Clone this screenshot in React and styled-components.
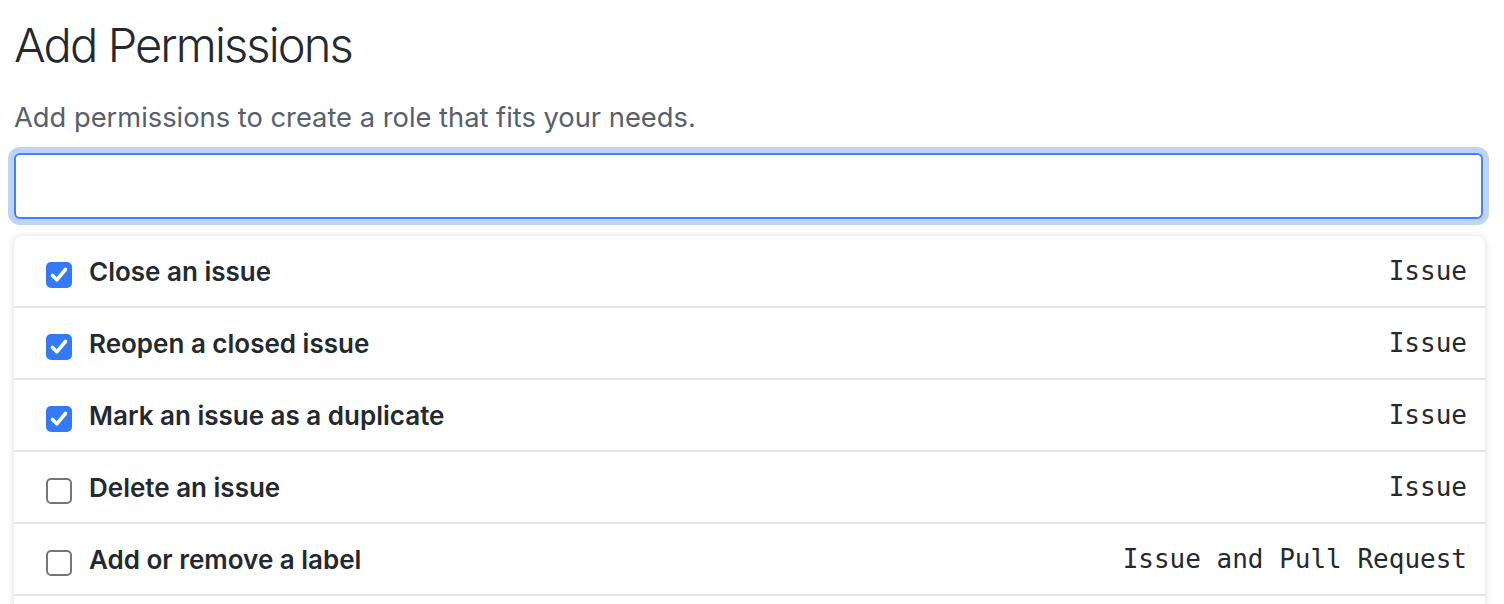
import React from "react";
import styled, { createGlobalStyle } from "styled-components";

const Global = createGlobalStyle`
  html, body { margin: 0; padding: 0; background: #ffffff; }
  body { font-family: Inter, "Noto Sans", sans-serif; color: #24292f; }
`;

const Page = styled.div`
  padding: 0 21px 0 14px;
  display: flex;
  flex-direction: column;
`;

const Title = styled.h1`
  margin: 15px 0 0;
  font-size: 47px;
  font-weight: 300;
  line-height: 60px;
  letter-spacing: -1.9px;
  color: #24292f;
`;

const Description = styled.p`
  margin: 25px 0 0;
  font-size: 27.3px;
  font-weight: 400;
  line-height: 36px;
  color: #57606a;
`;

const SearchInput = styled.input`
  margin-top: 17px;
  height: 66px;
  box-sizing: border-box;
  width: 100%;
  border: 2px solid #3d85f5;
  border-radius: 6px;
  box-shadow: 0 0 0 6px #bfd3f4;
  outline: none;
  font-size: 28px;
  padding: 0 16px;
`;

const Panel = styled.ul`
  list-style: none;
  margin: 17px 0 0;
  padding: 0 0 12px;
  width: calc(100% + 2px);
  border-radius: 8px 8px 0 0;
  box-shadow: 0 1px 8px rgba(0, 0, 0, 0.14), 0 0 1px rgba(0, 0, 0, 0.1);
  background: #fff;
`;

const Row = styled.li`
  height: 70px;
  display: flex;
  align-items: center;
  padding: 0 18px 0 32px;
  border-bottom: 2px solid #e4e4e8;
`;

const Box = styled.span`
  width: 26px;
  height: 26px;
  box-sizing: border-box;
  border-radius: 5px;
  flex: none;
  margin-top: 8px;
  display: flex;
  align-items: center;
  justify-content: center;
  background: ${(p) => (p.$checked ? "#3479f6" : "#ffffff")};
  border: ${(p) => (p.$checked ? "none" : "2px solid #767676")};
`;

const Label = styled.span`
  margin-left: 17px;
  font-size: 26px;
  font-weight: 600;
  color: #24292f;
  flex: 1;
`;

const Kind = styled.span`
  font-family: "DejaVu Sans Mono", "Liberation Mono", monospace;
  font-size: 26px;
  color: #24292f;
`;

const Check = () => (
  <svg width="26" height="26" viewBox="0 0 26 26" fill="none">
    <path d="M6.5 13.5 L10.8 17.8 L19.5 7.5" stroke="#fff" strokeWidth="3.6" strokeLinecap="round" strokeLinejoin="round" />
  </svg>
);

const items = [
  { label: "Close an issue", kind: "Issue", checked: true },
  { label: "Reopen a closed issue", kind: "Issue", checked: true },
  { label: "Mark an issue as a duplicate", kind: "Issue", checked: true },
  { label: "Delete an issue", kind: "Issue", checked: false },
  { label: "Add or remove a label", kind: "Issue and Pull Request", checked: false },
];

export default function App() {
  return (
    <>
      <Global />
      <Page>
        <Title>Add Permissions</Title>
        <Description>Add permissions to create a role that fits your needs.</Description>
        <SearchInput type="text" />
        <Panel>
          {items.map((it) => (
            <Row key={it.label}>
              <Box $checked={it.checked}>{it.checked && <Check />}</Box>
              <Label>{it.label}</Label>
              <Kind>{it.kind}</Kind>
            </Row>
          ))}
        </Panel>
      </Page>
    </>
  );
}
